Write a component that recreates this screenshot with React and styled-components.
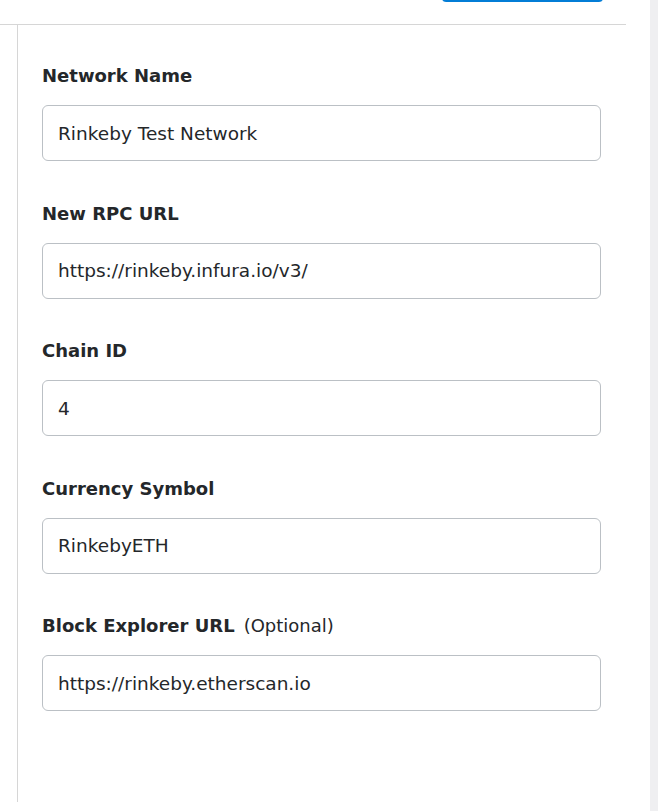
import React from "react";
import styled, { createGlobalStyle } from "styled-components";

const GlobalStyle = createGlobalStyle`
  html, body {
    margin: 0;
    padding: 0;
    background: #fff;
  }
  body {
    font-family: "DejaVu Sans", "Noto Sans", "Liberation Sans", sans-serif;
    color: #24272a;
  }
  * {
    box-sizing: border-box;
  }
`;

const fields = [
  { label: "Network Name", value: "Rinkeby Test Network" },
  { label: "New RPC URL", value: "https://rinkeby.infura.io/v3/" },
  { label: "Chain ID", value: "4" },
  { label: "Currency Symbol", value: "RinkebyETH" },
  { label: "Block Explorer URL", value: "https://rinkeby.etherscan.io", optional: true },
];

const App = () => {
  return (
    <Page>
      <GlobalStyle />
      <Main>
        <Header>
          {/* only the bottom edge of the Save button is in view */}
          <SaveButton aria-label="Save" />
        </Header>
        <Body>
          <Sidebar />
          <Panel>
            {fields.map((f) => (
              <Field key={f.label}>
                <Label>
                  {f.label}
                  {f.optional && <Optional>(Optional)</Optional>}
                </Label>
                <Input type="text" defaultValue={f.value} />
              </Field>
            ))}
          </Panel>
        </Body>
      </Main>
      <ScrollTrack />
    </Page>
  );
};

export default App;

const Page = styled.div`
  display: flex;
  width: 658px;
  height: 811px;
  overflow: hidden;
`;

const Main = styled.div`
  width: 650px;
  display: flex;
  flex-direction: column;
`;

const Header = styled.div`
  width: 626px;
  height: 25px;
  border-bottom: 1px solid #d6d6d6;
  display: flex;
  justify-content: flex-end;
  align-items: flex-start;
  padding-right: 23px;
  overflow: hidden;
`;

const SaveButton = styled.button`
  width: 161px;
  height: 40px;
  margin-top: -38px;
  border: none;
  border-radius: 4px;
  background: #037dd6;
  padding: 0;
`;

const Body = styled.div`
  display: flex;
  width: 626px;
`;

const Sidebar = styled.div`
  width: 17px;
`;

const Panel = styled.div`
  width: 609px;
  height: 777px;
  border-left: 1px solid #d6d6d6;
  padding: 39px 24px 0 24px;
  display: flex;
  flex-direction: column;
`;

const Field = styled.div`
  display: flex;
  flex-direction: column;
  margin-bottom: 40.5px;
`;

const Label = styled.label`
  font-size: 18px;
  line-height: 24px;
  font-weight: 700;
  color: #24272a;
  margin-bottom: 17px;
`;

const Optional = styled.span`
  font-weight: 400;
  margin-left: 9px;
`;

const Input = styled.input`
  width: 559px;
  height: 56px;
  border: 1px solid #bbc0c5;
  border-radius: 6px;
  padding: 0 15px;
  font-family: inherit;
  font-size: 18.5px;
  color: #24272a;
  outline: none;
  background: #fff;
`;

const ScrollTrack = styled.div`
  width: 8px;
  height: 811px;
  background: #efeff1;
`;
